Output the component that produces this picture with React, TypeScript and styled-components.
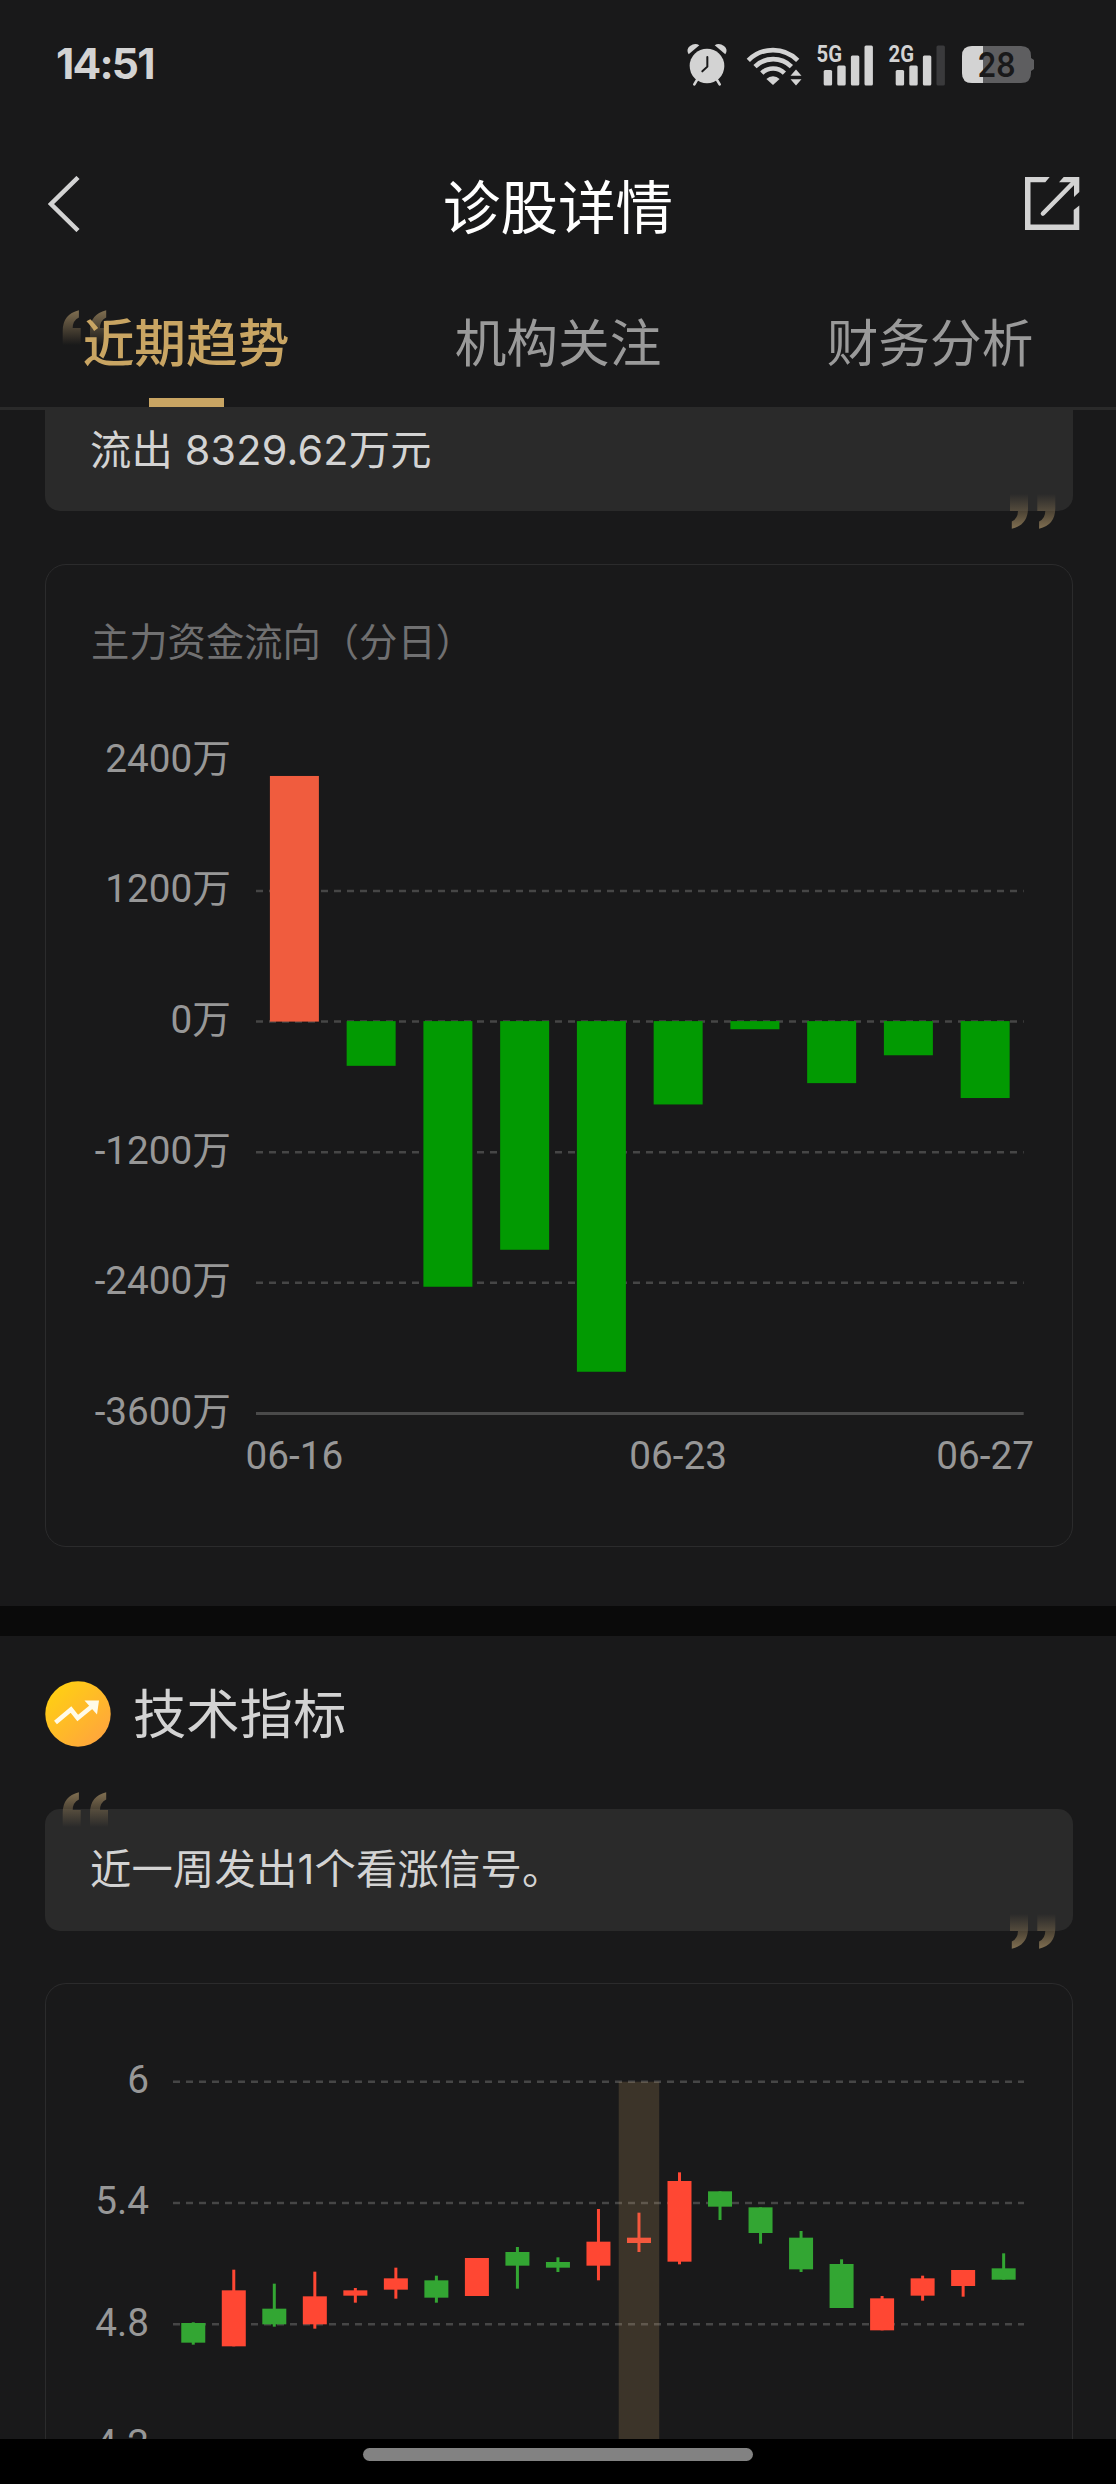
import React from 'react';
import styled, { createGlobalStyle } from 'styled-components';

const CJK = '"Noto Sans CJK SC", sans-serif';
const INK = '#d3d3d3';
const GOLD = '#c9a563';

const GlobalStyle = createGlobalStyle`
  * { box-sizing: border-box; }
  body { margin: 0; background: #19191a; }
  svg { display: block; flex: none; }
`;

const Screen = styled.div`
  width: 1116px;
  height: 2484px;
  display: flex;
  flex-direction: column;
  overflow: hidden;
  background: #19191a;
  color: ${INK};
  font-family: ${CJK};
`;

const Header = styled.header`
  position: relative;
  z-index: 1;
  flex: none;
  border-bottom: 3px solid #2a2a2a;
`;

const StatusBar = styled.div`
  height: 129px;
  padding: 0 82px 0 56px;
  display: flex;
  align-items: center;
  justify-content: space-between;
`;

const Clock = styled.span`
  font: 700 42.5px/1 Inter, sans-serif;
  letter-spacing: -1.8px;
`;

const StatusIcons = styled.div`
  display: flex;
  align-items: center;

  svg {
    overflow: visible;
  }
`;

const NavBar = styled.div`
  height: 149px;
  padding: 0 36px;
  display: grid;
  grid-template-columns: 1fr auto 1fr;
  align-items: center;
`;

const NavStart = styled.div`
  padding-left: 12px;
`;

const NavEnd = styled.div`
  display: flex;
  justify-content: flex-end;
`;

const PageTitle = styled.h1`
  margin: 0;
  font-weight: 400;
  font-size: 57.6px;
  line-height: 80px;
  color: #fff;
`;

const Tabs = styled.nav`
  height: 129px;
  display: grid;
  grid-template-columns: repeat(3, 1fr);
`;

const Tab = styled.div<{ $active?: boolean }>`
  display: flex;
  flex-direction: column;
  align-items: center;
  justify-content: space-between;
  padding-top: 26px;
  font-size: 51.7px;
  line-height: 72px;
  font-weight: ${(p) => (p.$active ? 500 : 400)};
  color: ${(p) => (p.$active ? GOLD : '#9a9a9a')};
`;

const TabMark = styled.i`
  width: 75px;
  height: 9px;
  background: ${GOLD};
`;

const Main = styled.main`
  flex: 1;
  min-height: 0;
  display: flex;
  flex-direction: column;
`;

const Section = styled.section<{ $fill?: boolean }>`
  flex: ${(p) => (p.$fill ? '1' : 'none')};
  min-height: 0;
  display: flex;
  flex-direction: column;
  padding: 0 43px 0 45px;
`;

const Callout = styled.div<{ $cut?: boolean }>`
  position: relative;
  flex: none;
  height: ${(p) => (p.$cut ? 101 : 122)}px;
  padding: ${(p) => (p.$cut ? '9px' : '29px')} 45px 0;
  border-radius: ${(p) => (p.$cut ? '0 0 15px 15px' : '15px')};
  background: #2a2a2a;
  font: 400 41.3px/62px Inter, ${CJK};
  letter-spacing: 0.2px;
`;

const OpenQuote = styled.svg<{ $top: number }>`
  position: absolute;
  left: 17px;
  top: ${(p) => p.$top}px;
  transform: rotate(180deg);
`;

const CloseQuote = styled.svg`
  position: absolute;
  right: 17px;
  bottom: -17.5px;
`;

const Panel = styled.div<{ $open?: boolean }>`
  flex: ${(p) => (p.$open ? '1' : 'none')};
  min-height: 0;
  margin-top: ${(p) => (p.$open ? 52 : 53)}px;
  border: 1px solid #2b2b2c;
  border-bottom-width: ${(p) => (p.$open ? 0 : 1)}px;
  border-radius: ${(p) => (p.$open ? '21px 21px 0 0' : '21px')};
  overflow: hidden;
`;

const PanelTitle = styled.h3`
  margin: 0;
  padding: 47px 0 0 45px;
  font-weight: 400;
  font-size: 38.3px;
  line-height: 56px;
  color: #707071;
`;

const Chart = styled.svg`
  font-family: Roboto, ${CJK};
  font-size: 38.7px;
`;

const Divider = styled.div`
  flex: none;
  height: 30px;
  margin-top: 59px;
  background: #0a0a0a;
`;

const SectionHead = styled.div`
  display: flex;
  align-items: center;
  gap: 22px;
  padding: 45px 0 62px;
`;

const SectionTitle = styled.h2`
  margin: 0;
  font-weight: 400;
  font-size: 53.3px;
  line-height: 66px;
  transform: translateY(-3px);
`;

const HomeBar = styled.footer`
  flex: none;
  height: 45px;
  padding-top: 9px;
  display: flex;
  justify-content: center;
  background: #000;
`;

const HomePill = styled.i`
  width: 390px;
  height: 13px;
  border-radius: 7px;
  background: #828282;
`;

/* ---------- status icons ---------- */

const AlarmIcon = () => (
  <svg width="40" height="43" viewBox="81 131 120 129" fill={INK}>
    <path d="M86 165Q77 150 90 140Q105 129 118 138Z" />
    <path d="M196 165Q205 150 192 140Q177 129 164 138Z" />
    <circle cx="141" cy="200" r="56" fill="#19191a" />
    <circle cx="141" cy="200" r="52" />
    <path d="M112 240l-9 15M170 240l9 15" stroke={INK} strokeWidth="8" strokeLinecap="round" />
    <path d="M142 173v29l-15 14" fill="none" stroke="#19191a" strokeWidth="6" strokeLinecap="round" />
  </svg>
);

const WifiIcon = () => (
  <svg width="56" height="42" viewBox="0 0 56 42" fill="none" stroke={INK} strokeWidth="4.6">
    <path d="M2.3 16.3a35 35 0 0 1 49.4 0M9 22.6a26 26 0 0 1 36.4 0M15.8 29.2a16 16 0 0 1 22.6 0" />
    <path d="M27 41l-6.6-6a9.3 9.3 0 0 1 13.2 0z" fill={INK} stroke="none" />
    <path d="M50 25.500l5.500 6.200h-11zM50 41.500l5.500-6.200h-11z" fill={INK} stroke="none" />
  </svg>
);

const SignalIcon = ({ label, bars }: { label: string; bars: number }) => (
  <svg width="56" height="42" viewBox="0 0 56 42" fill={INK}>
    <text x="-0.500" y="18.300" fontFamily="Roboto, sans-serif" fontWeight="700" fontSize="24.500"
      textLength="25.500" lengthAdjust="spacingAndGlyphs">{label}</text>
    {[15.5, 20, 30, 40].map((h, i) => (
      <rect key={h} x={6.7 + i * 13.6} y={41.5 - h} width="8.400" height={h} rx="1.500"
        fill={i < bars ? INK : '#3a3a3c'} />
    ))}
  </svg>
);

const BatteryIcon = () => (
  <svg width="72" height="37" viewBox="0 0 72 37">
    <path d="M10 0H59Q69 0 69 10V12L72 14V23L69 25V27Q69 37 59 37H10Q0 37 0 27V10Q0 0 10 0Z" fill="#5e5e60" />
    <path d="M10 0H21V37H10Q0 37 0 27V10Q0 0 10 0Z" fill={INK} />
    <text x="34.500" y="30.800" textAnchor="middle" fontFamily="Inter, sans-serif" fontWeight="600"
      fontSize="34" textLength="38" lengthAdjust="spacingAndGlyphs" fill="#19191a">28</text>
  </svg>
);

const Gap = styled.span<{ $w: number }>`
  width: ${(p) => p.$w}px;
`;

const BackIcon = () => (
  <svg width="32" height="56" viewBox="0 0 32 56" fill="none" stroke={INK} strokeWidth="4.500">
    <path d="M30 1.500L3 28L30 54.500" />
  </svg>
);

const ShareIcon = () => (
  <svg width="55" height="53" viewBox="0 0 55 53" fill={INK}>
    <path d="M0 0H24.700L20.300 5.300H5.500V47.500H48.700V33L54.300 28.500V53H0Z" />
    <path d="M38.700 0H54.300V15L49 20V5.300H34Z" />
    <path d="M18 36.500L50 4" stroke={INK} strokeWidth="4.600" strokeLinecap="round" />
  </svg>
);

const TrendIcon = () => (
  <svg width="66" height="66" viewBox="0 0 66 66">
    <defs>
      <linearGradient id="coin" x1="0.100" y1="0.100" x2="0.850" y2="0.900">
        <stop offset="0" stopColor="#ffd012" />
        <stop offset="1" stopColor="#ffa63c" />
      </linearGradient>
    </defs>
    <circle cx="33" cy="33" r="32.700" fill="url(#coin)" />
    <path d="M10.500 41.500L26 28.500L32.700 37L48 24.500" fill="none" stroke="#fffbe8" strokeWidth="4.500" />
    <path d="M39.500 19.500H54L52 33.500Z" fill="#fffbe8" />
  </svg>
);

const QuoteShape = () => (
  <>
    <defs>
      <linearGradient id="quoteFade" x1="0" y1="0" x2="0" y2="35" gradientUnits="userSpaceOnUse">
        <stop offset="0" stopColor="#8c7653" stopOpacity="0" />
        <stop offset="1" stopColor="#8c7958" stopOpacity="0.9" />
      </linearGradient>
    </defs>
    {[0, 27.3].map((x) => (
      <path key={x} transform={`translate(${x} 0)`} fill="url(#quoteFade)"
        d="M0 0H18V14Q18 31 1.800 34.700V27.500Q8 24.500 8 17H0Z" />
    ))}
  </>
);

/* ---------- daily capital flow ---------- */

const FLOW_STEP = 130.6;
const FLOW_ZERO = 1021.6;
const FLOW_LEFT = 256;
const FLOW_PITCH = 76.75;
const flows = [2257, -411, -2441, -2101, -3222, -766, -75, -570, -314, -707];
const flowTicks = [2400, 1200, 0, -1200, -2400, -3600];
const flowDates: [number, string][] = [[0, '06-16'], [5, '06-23'], [9, '06-27']];

const FlowChart = () => (
  <Chart width="1026" height="878" viewBox="46 668 1026 878">
    {flowTicks.map((t) => {
      const y = FLOW_ZERO - (t / 1200) * FLOW_STEP;
      const axis = t === -3600;
      return (
        <g key={t}>
          <text x="231" y={y + 11.3} textAnchor="end" fill="#979797">{t}万</text>
          {t !== 2400 && (
            <line x1={FLOW_LEFT} x2="1023.700" y1={y} y2={y} stroke={axis ? '#4a4a4a' : '#464646'}
              strokeWidth={axis ? 3 : 2.5} strokeDasharray={axis ? undefined : '7 6'} />
          )}
        </g>
      );
    })}
    {flows.map((v, i) => {
      const h = (Math.abs(v) / 1200) * FLOW_STEP;
      return (
        <rect key={i} x={FLOW_LEFT + i * FLOW_PITCH + 13.9} width="49" y={v > 0 ? FLOW_ZERO - h : FLOW_ZERO - 0.5}
          height={h} fill={v > 0 ? '#f05c3e' : '#029a02'} />
      );
    })}
    {flowDates.map(([i, d]) => (
      <text key={d} x={FLOW_LEFT + (i + 0.5) * FLOW_PITCH} y="1469" textAnchor="middle" fill="#979797">{d}</text>
    ))}
  </Chart>
);

/* ---------- price candles ---------- */

const PRICE_STEP = 121.3;
const PRICE_TOP = 2081.7;
const PRICE_LEFT = 173;
const PRICE_PITCH = 40.52;
const RISE = '#ff4733';
const FALL = '#33a633';

// [rising, body top, body bottom, high, low], in thirds of a pixel below y = 2040
const candles: [number, number, number, number, number][] = [
  [0, 849, 908, 847, 914], [1, 751, 919, 689, 919], [0, 806, 853, 731, 860],
  [1, 769, 853, 695, 866], [1, 751, 767, 744, 788], [1, 715, 749, 683, 776],
  [0, 721, 773, 707, 788], [1, 654, 768, 654, 768], [0, 636, 677, 621, 746],
  [0, 666, 683, 652, 696], [1, 605, 677, 507, 721], [1, 593, 609, 518, 636],
  [1, 423, 665, 397, 673], [0, 454, 500, 454, 540], [0, 502, 579, 502, 611],
  [0, 593, 688, 573, 696], [0, 672, 804, 658, 804], [1, 775, 871, 768, 871],
  [1, 715, 767, 707, 782], [1, 690, 738, 690, 770], [0, 685, 719, 640, 719],
];
const priceTicks = ['6', '5.4', '4.8', '4.2'];

const CandleChart = () => (
  <Chart width="1026" height="455" viewBox="46 1984 1026 455">
    {priceTicks.map((t, i) => {
      const y = PRICE_TOP + i * PRICE_STEP;
      return (
        <g key={t}>
          <text x="149" y={y + 11.3} textAnchor="end" fill="#979797">{t}</text>
          <line x1={PRICE_LEFT} x2="1024" y1={y} y2={y} stroke="#464646" strokeWidth="2.500" strokeDasharray="7 6" />
        </g>
      );
    })}
    {candles.map(([up, top, bottom, high, low], i) => {
      const cx = PRICE_LEFT + (i + 0.5) * PRICE_PITCH;
      const fill = up ? RISE : FALL;
      return (
        <g key={i} fill={fill}>
          <rect x={cx - 1.5} width="3" y={2040 + high / 3} height={(low - high) / 3} />
          <rect x={cx - 12} width="24" y={2040 + top / 3} height={(bottom - top) / 3} />
        </g>
      );
    })}
    <rect x={PRICE_LEFT + 11 * PRICE_PITCH} width={PRICE_PITCH} y={PRICE_TOP} height="360" fill="#c9a06a" fillOpacity="0.2" />
  </Chart>
);

export default function App() {
  return (
    <>
      <GlobalStyle />
      <Screen>
        <Header>
          <StatusBar>
            <Clock>14:51</Clock>
            <StatusIcons>
              <AlarmIcon />
              <Gap $w={19} />
              <WifiIcon />
              <Gap $w={15} />
              <SignalIcon label="5G" bars={4} />
              <Gap $w={16} />
              <SignalIcon label="2G" bars={3} />
              <Gap $w={17} />
              <BatteryIcon />
            </StatusIcons>
          </StatusBar>
          <NavBar>
            <NavStart><BackIcon /></NavStart>
            <PageTitle>诊股详情</PageTitle>
            <NavEnd><ShareIcon /></NavEnd>
          </NavBar>
          <Tabs>
            <Tab $active>近期趋势<TabMark /></Tab>
            <Tab>机构关注</Tab>
            <Tab>财务分析</Tab>
          </Tabs>
        </Header>
        <Main>
          <Section>
            <Callout $cut>
              <OpenQuote $top={-100} width="46" height="35"><QuoteShape /></OpenQuote>
              流出 8329.62万元
              <CloseQuote width="46" height="35"><QuoteShape /></CloseQuote>
            </Callout>
            <Panel>
              <PanelTitle>主力资金流向（分日）</PanelTitle>
              <FlowChart />
            </Panel>
          </Section>
          <Divider />
          <Section $fill>
            <SectionHead>
              <TrendIcon />
              <SectionTitle>技术指标</SectionTitle>
            </SectionHead>
            <Callout>
              <OpenQuote $top={-17.5} width="46" height="35"><QuoteShape /></OpenQuote>
              近一周发出1个看涨信号。
              <CloseQuote width="46" height="35"><QuoteShape /></CloseQuote>
            </Callout>
            <Panel $open>
              <CandleChart />
            </Panel>
          </Section>
        </Main>
        <HomeBar><HomePill /></HomeBar>
      </Screen>
    </>
  );
}
